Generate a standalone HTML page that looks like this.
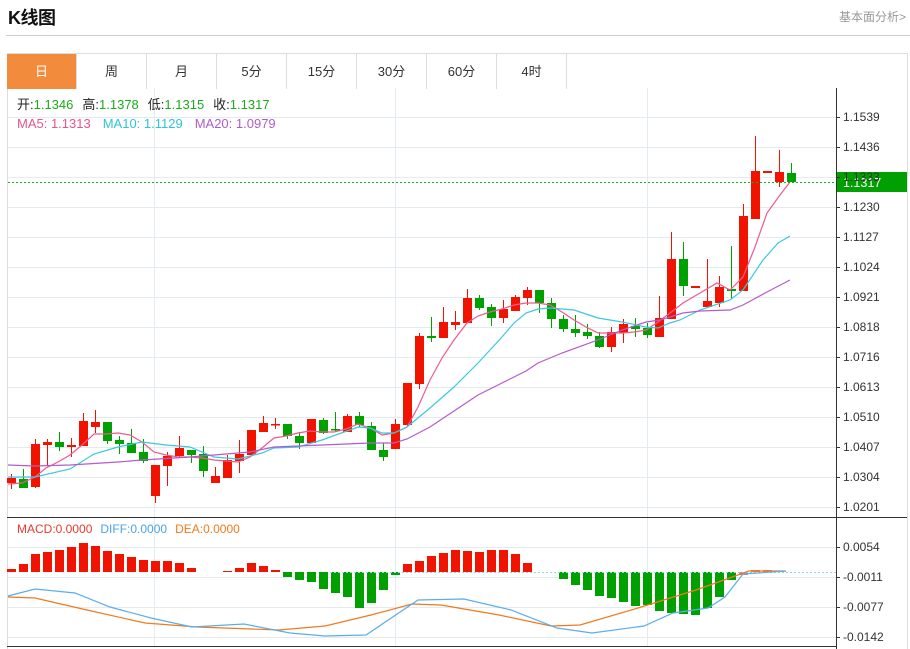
<!DOCTYPE html>
<html><head><meta charset="utf-8">
<style>
body{margin:0;width:910px;height:649px;overflow:hidden;background:#fff;font-family:"Liberation Sans","Noto Sans CJK SC",sans-serif;position:relative}
.t{position:absolute;left:8px;top:4px;font-size:18px;font-weight:bold;color:#111;letter-spacing:-0.5px}
.r{position:absolute;right:4px;top:8px;font-size:12px;color:#999}
.hl{position:absolute;left:6px;right:0;top:35px;border-top:1px solid #ccc}
.tabs{position:absolute;left:7px;top:53px;height:35px;display:flex;border-top:1px solid #ddd}
.tabs div{width:69px;border-right:1px solid #ddd;height:35px;line-height:35px;text-align:center;font-size:13px;color:#333}
.tabs div.a{background:#f28c3c;color:#fff}
svg{position:absolute;left:0;top:0}
</style></head><body>
<div class="t">K线图</div>
<div class="r">基本面分析&gt;</div>
<div class="hl"></div>
<svg width="910" height="649" id="s" font-family="Liberation Sans, Noto Sans CJK SC, sans-serif">
<rect x="7.5" y="53.5" width="900" height="600" fill="none" stroke="#ddd"/>
<g stroke="#e3eaf0" stroke-width="1" id="grid"></g>
<line x1="836.5" y1="88" x2="836.5" y2="649" stroke="#333"/>
<line x1="7" y1="517.5" x2="907" y2="517.5" stroke="#333"/>
<line x1="7" y1="646.5" x2="836" y2="646.5" stroke="#333"/>
<g id="c"></g>
<line x1="8" y1="182.5" x2="836" y2="182.5" stroke="#1aab1a" stroke-dasharray="2,2"/>
<rect x="837" y="172" width="70" height="20" fill="#00a000"/>
<text x="843" y="187" font-size="12.5" fill="#fff">1.1317</text>
<g font-size="12" fill="#333" id="ax"></g>
<text x="17" y="109" font-size="13"><tspan fill="#222">开:</tspan><tspan fill="#1aab1a">1.1346</tspan><tspan fill="#222" dx="9">高:</tspan><tspan fill="#1aab1a">1.1378</tspan><tspan fill="#222" dx="9">低:</tspan><tspan fill="#1aab1a">1.1315</tspan><tspan fill="#222" dx="9">收:</tspan><tspan fill="#1aab1a">1.1317</tspan></text>
<text x="17" y="128" font-size="13"><tspan fill="#e8558a">MA5: 1.1313</tspan><tspan fill="#2ec4dc" dx="12">MA10: 1.1129</tspan><tspan fill="#b05cc8" dx="12">MA20: 1.0979</tspan></text>
<text x="17" y="533" font-size="12"><tspan fill="#e83a2a">MACD:0.0000</tspan><tspan fill="#4aa3e8" dx="8">DIFF:0.0000</tspan><tspan fill="#f07a1c" dx="8">DEA:0.0000</tspan></text>
</svg>
<div class="tabs"><div class="a">日</div><div>周</div><div>月</div><div>5分</div><div>15分</div><div>30分</div><div>60分</div><div>4时</div></div>
<script>
var NS="http://www.w3.org/2000/svg";
function el(p,t,a){var e=document.createElementNS(NS,t);for(var k in a)e.setAttribute(k,a[k]);p.appendChild(e);return e;}
var g=document.getElementById('grid'),c=document.getElementById('c'),ax=document.getElementById('ax');
var ys=[117,147,177,207,237,267,297,327,357,387,417,447,477,507];
var lb=["1.1539","1.1436","1.1333","1.1230","1.1127","1.1024","1.0921","1.0818","1.0716","1.0613","1.0510","1.0407","1.0304","1.0201"];
ys.forEach(function(y,i){el(g,'line',{x1:8,x2:836,y1:y+.5,y2:y+.5});el(ax,'line',{x1:836,x2:840,y1:y+.5,y2:y+.5,stroke:'#333'});var t=el(ax,'text',{x:843,y:y+4});t.textContent=lb[i];});
[154,395,647].forEach(function(x){el(g,'line',{x1:x+.5,x2:x+.5,y1:88,y2:646});});
el(g,'line',{x1:8,x2:836,y1:117.5,y2:117.5});
var my=[547,577,607,637],ml=["0.0054","-0.0011","-0.0077","-0.0142"];
my.forEach(function(y,i){el(g,'line',{x1:8,x2:836,y1:y+.5,y2:y+.5});el(ax,'line',{x1:836,x2:840,y1:y+.5,y2:y+.5,stroke:'#333'});var t=el(ax,'text',{x:843,y:y+4});t.textContent=ml[i];});
var K=[['r',478,483,474,489],['g',479,488,469,488],['r',444,487,439,488],['r',442,445,439,466],['g',442,447,432,451],['r',445,447,438,457],['r',421,446,413,446],['r',422,427,410,433],['g',422,441,422,444],['g',440,444,436,454],['g',443,453,429,453],['g',452,461,439,463],['r',465,496,465,503],['r',456,466,452,486],['r',448,456,436,458],['g',450,455,450,463],['g',454,471,446,477],['r',476,483,467,483],['r',460,478,455,478],['r',454,461,440,473],['r',430,455,430,455],['r',423,432,416,432],['r',424,425,418,429],['g',424,436,424,439],['g',436,443,432,449],['r',419,443,419,443],['g',420,433,418,434],['g',429,430,412,432],['r',416,432,414,432],['g',416,425,412,427],['g',426,450,422,450],['g',450,457,443,461],['r',424,449,419,449],['r',383,425,383,426],['r',336,384,333,389],['g',336,338,317,342],['r',322,338,307,338],['r',322,325,311,330],['r',298,323,289,323],['g',298,308,295,310],['g',307,318,304,326],['r',309,318,300,323],['r',297,311,295,311],['r',290,298,287,305],['g',290,303,290,313],['g',303,319,298,328],['g',319,329,315,332],['g',329,333,315,337],['g',332,336,324,339],['g',336,347,332,348],['r',332,347,327,352],['r',324,333,319,343],['g',326,329,318,337],['g',328,335,323,338],['r',318,337,296,337],['r',259,319,232,319],['g',259,286,242,296],['r',286,288,286,288],['r',301,307,259,308],['r',287,303,276,307],['g',289,291,246,299],['r',216,291,204,291],['r',171,219,136,219],['r',171,173,171,173],['r',172,182,150,187],['g',173,182,163,182]];
K.forEach(function(k,i){var x=11+12*i,col=k[0]=='r'?'#f01400':'#00a000';el(c,'line',{x1:x+.5,x2:x+.5,y1:k[3],y2:k[4],stroke:col});el(c,'rect',{x:x-4,y:k[1],width:9,height:Math.max(1.5,k[2]-k[1]),fill:col});});
function pl(pts,col){el(c,'polyline',{points:pts,fill:'none',stroke:col,'stroke-width':1.2});}
pl("8,484 22,483 35,477 46,468 58,462 70,455 82,445 94,434 106,434 118,433 130,435 142,442 154,452 166,455 178,457 190,457 202,458 214,460 226,461 238,462 250,457 262,448 274,438 286,436 298,433 310,431 322,432 334,432 346,429 358,424 370,428 382,435 394,433 407,427 418,407 430,380 442,358 454,340 467,323 478,316 490,312 502,309 514,305 526,303 538,303 550,305 562,312 574,320 586,327 598,333 610,333 622,333 634,332 646,330 658,322 670,313 683,303 700,293 717,283 730,290 743,277 755,247 767,213 780,195 790,182","#ee5a8e");
pl("8,477 35,477 70,469 94,454 118,447 142,442 166,445 190,447 214,457 238,459 262,453 274,448 298,447 322,440 358,427 370,428 382,433 394,433 407,427 430,408 454,387 478,363 502,337 514,323 526,313 538,309 550,308 574,310 598,318 622,322 646,327 658,328 670,323 680,320 700,310 730,300 743,290 763,260 778,243 790,236","#3cc8e0");
pl("8,465 35,466 70,465 118,462 142,460 190,457 214,455 250,452 274,447 322,445 370,443 394,443 407,439 430,427 454,411 478,395 502,383 526,371 538,363 562,353 598,340 622,330 646,322 660,320 683,313 700,311 730,310 743,305 767,292 790,280","#b35ccc");
var M=[569,564,554,552,550,547,543,546,551,554,557,560,561,561,563,568,572,572,571,568,563,566,570,577,580,582,589,593,597,608,603,590,575,564,561,556,553,550,551,552,550,550,554,563,572,572,579,585,590,596,598,602,606,605,611,613,614,615,608,597,580,575,570,570,571,572];
M.forEach(function(v,i){var x=11+12*i;if(Math.abs(v-572)<1)return;var col=v<572?'#f01400':'#00a000';if(i>=61)col='#f07070';el(c,'rect',{x:x-4,y:Math.min(v,572),width:9,height:Math.abs(v-572),fill:col});});
el(c,'line',{x1:330,x2:836,y1:572.5,y2:572.5,stroke:'#8fd8e8','stroke-dasharray':'2,2'});
pl("8,597 35,598 87,610 145,623 197,627 279,630 325,626 371,615 412,604 441,605 499,615 551,626 580,625 638,608 696,590 749,571 786,571","#f07a1c");
pl("8,596 35,589 75,593 110,607 151,618 192,627 244,624 290,633 325,636 366,635 418,600 464,599 511,610 557,628 592,633 644,626 673,613 708,608 725,597 743,574 786,571","#5aaeea");
</script>
</body></html>
